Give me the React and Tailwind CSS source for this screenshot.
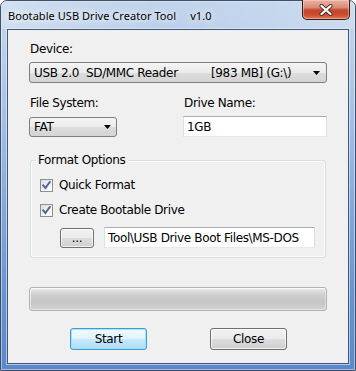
import React from "react";

const ui = "font-['DejaVu_Sans',sans-serif] text-[12px] leading-[14px] tracking-[-0.35px] text-black";

function Arrow() {
  return (
    <svg width="7" height="4" viewBox="0 0 7 4" className="block">
      <path d="M0 0 H7 L3.5 4 Z" fill="#000" />
    </svg>
  );
}

function Check() {
  return (
    <div className="w-[13px] h-[13px] border border-[#8e8f8f] bg-[linear-gradient(135deg,#d9dbdf,#f8f8f8_70%,#ffffff)] p-0 shrink-0">
      <svg width="11" height="11" viewBox="0 0 11 11" className="block">
        <polyline points="2.2,5.3 4.4,8 8.8,2" fill="none" stroke="#4b6291" strokeWidth="1.9" strokeLinecap="square" strokeLinejoin="miter" />
      </svg>
    </div>
  );
}

export default function App() {
  return (
    <div className="w-[356px] h-[371px] overflow-hidden">
      <div className="w-[356px] h-[371px] flex flex-col rounded-t-[7px] border border-[#3f4f66] bg-[linear-gradient(180deg,#c8d8ec_0%,#bcd0ea_12%,#a7c1e6_30%,#86a9dc_55%,#6893d0_80%,#5b88cb_100%)] shadow-[inset_0_0_0_1px_rgba(255,255,255,0.45)]">
        {/* Title bar */}
        <div className="h-[28px] flex items-start bg-[linear-gradient(90deg,rgba(215,228,242,0.7)_0%,rgba(200,218,240,0.4)_20%,rgba(150,185,230,0.15)_45%,rgba(195,215,238,0.5)_75%,rgba(215,228,242,0.5)_100%)] rounded-t-[6px]">
          <div className="pl-[7px] pt-[8px] flex font-['Noto_Sans',sans-serif] text-[11px] leading-[14px] tracking-[0.05px] text-black [text-shadow:0_0_6px_#ffffff,0_0_10px_#ffffff]">
            <span>Bootable USB Drive Creator Tool</span>
            <span className="ml-[14px]">v1.0</span>
          </div>
          <div className="ml-auto mr-[5px] mt-[-1px] w-[48px] h-[20px] rounded-b-[5px] border border-t-0 border-[#3a1d18] bg-[linear-gradient(180deg,#eab2a3_0%,#d98a76_40%,#c44a2d_52%,#c8482a_75%,#dd7a55_100%)] shadow-[inset_0_0_0_1px_rgba(255,220,210,0.45)] flex items-center justify-center">
            <svg width="14" height="12" viewBox="0 0 14 12" className="block">
              <path d="M2.5 2 L11.5 10 M11.5 2 L2.5 10" stroke="#4a2a25" strokeWidth="4" strokeLinecap="round" />
              <path d="M2.5 2 L11.5 10 M11.5 2 L2.5 10" stroke="#ffffff" strokeWidth="2.3" strokeLinecap="round" />
            </svg>
          </div>
        </div>

        {/* Client area */}
        <div className={`mx-[6px] mb-[6px] flex-1 border border-[#425675] bg-[#f0f0f0] shadow-[0_0_0_1px_rgba(230,240,252,0.6)] pl-[21px] pr-[21px] pt-[12px] ${ui}`}>
          <div className="pl-[1px]">Device:</div>
          <div className="mt-[6px] h-[21px] flex items-center rounded-[3px] border border-[#7f7f7f] bg-[linear-gradient(180deg,#f4f4f4_0%,#ebebeb_50%,#dddddd_51%,#d4d4d4_100%)] pl-[4px] pr-[6px]">
            <span className="w-[177px] whitespace-pre">USB 2.0  SD/MMC Reader</span>
            <span className="whitespace-pre">[983 MB] (G:\)</span>
            <span className="ml-auto"><Arrow /></span>
          </div>

          <div className="mt-[13px] flex">
            <div className="w-[88px] flex flex-col">
              <div className="pl-[1px]">File System:</div>
              <div className="mt-[7px] h-[20px] flex items-center rounded-[3px] border border-[#7f7f7f] bg-[linear-gradient(180deg,#f4f4f4_0%,#ebebeb_50%,#dddddd_51%,#d4d4d4_100%)] pl-[4px] pr-[5px]">
                <span>FAT</span>
                <span className="ml-auto"><Arrow /></span>
              </div>
            </div>
            <div className="ml-[66px] flex-1 flex flex-col">
              <div className="pl-[1px]">Drive Name:</div>
              <div className="mt-[6px] h-[21px] flex items-center border border-[#abadb3] border-l-[#dbdfe6] border-r-[#dbdfe6] border-b-[#e3e9ef] bg-white pl-[3px]">
                1GB
              </div>
            </div>
          </div>

          {/* Group box */}
          <div className="relative mt-[23px] ml-[1px] mr-[1px] h-[98px] rounded-[3px] border border-[#d5dfe5] shadow-[inset_0_0_0_1px_rgba(255,255,255,0.7)] pl-[9px] pt-[17px]">
            <span className="absolute left-[5px] top-[-8px] px-[2px] bg-[#f0f0f0]">Format Options</span>
            <div className="h-[14px] flex items-center">
              <Check />
              <span className="ml-[6px]">Quick Format</span>
            </div>
            <div className="mt-[11px] h-[14px] flex items-center">
              <Check />
              <span className="ml-[6px]">Create Bootable Drive</span>
            </div>
            <div className="mt-[10px] flex items-start">
              <div className="mt-[1px] ml-[20px] w-[34px] h-[20px] rounded-[3px] border border-[#707070] bg-[linear-gradient(180deg,#f2f2f2_0%,#ebebeb_50%,#dddddd_51%,#cfcfcf_100%)] shadow-[inset_0_0_0_1px_rgba(255,255,255,0.7)] flex items-center justify-center leading-[10px]">
                ...
              </div>
              <div className="ml-[10px] w-[211px] h-[21px] flex items-center border border-[#abadb3] border-l-[#dbdfe6] border-r-[#dbdfe6] border-b-[#e3e9ef] bg-white pl-[3px] whitespace-nowrap overflow-hidden">
                Tool\USB Drive Boot Files\MS-DOS
              </div>
            </div>
          </div>

          {/* Progress bar */}
          <div className="mt-[29px] h-[24px] rounded-[3px] border border-[#b2b2b2] bg-[linear-gradient(180deg,#f2f2f2_0%,#dddddd_12%,#cdcdcd_35%,#c6c6c6_65%,#d3d3d3_100%)] shadow-[inset_1px_1px_0_rgba(255,255,255,0.6),inset_-1px_-1px_0_rgba(255,255,255,0.4)]" />

          {/* Buttons */}
          <div className="mt-[17px] flex pl-[41px]">
            <div className="w-[77px] h-[22px] rounded-[3px] border border-[#3e9bd3] bg-[linear-gradient(180deg,#f0f9fe_0%,#e1f3fd_50%,#c6e8fb_51%,#afddf6_100%)] shadow-[inset_0_0_0_1px_rgba(160,225,250,0.9)] flex items-center justify-center">
              Start
            </div>
            <div className="ml-[63px] w-[77px] h-[22px] rounded-[3px] border border-[#707070] bg-[linear-gradient(180deg,#f2f2f2_0%,#ebebeb_50%,#dddddd_51%,#cfcfcf_100%)] shadow-[inset_0_0_0_1px_rgba(255,255,255,0.7)] flex items-center justify-center">
              Close
            </div>
          </div>
        </div>
      </div>
    </div>
  );
}
